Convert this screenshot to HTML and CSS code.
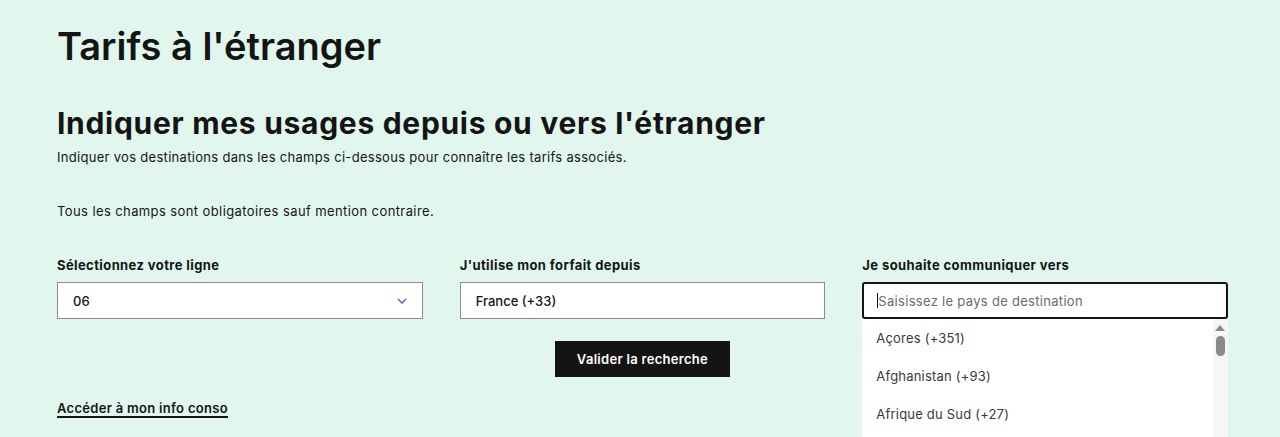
FILE: index.html
```html
<!DOCTYPE html>
<html lang="fr">
<head>
  <meta charset="UTF-8" />
  <meta name="viewport" content="width=device-width, initial-scale=1.0"/>
  <title>Tarifs à l'étranger</title>
  <link rel="stylesheet" href="styles.css">
</head>
<body>
  <main class="page">
    <h1>Tarifs à l'étranger</h1>

    <h2>Indiquer mes usages depuis ou vers l'étranger</h2>
    <p class="intro">Indiquer vos destinations dans les champs ci-dessous pour connaître les tarifs associés.</p>
    <p class="mandatory">Tous les champs sont obligatoires sauf mention contraire.</p>

    <div class="form">
      <div class="field">
        <label>Sélectionnez votre ligne</label>
        <div class="box select">
          <span>06</span>
          <svg class="chevron" width="10" height="6" viewBox="0 0 10 6"><path d="M1 1l4 4 4-4" fill="none" stroke="#6a5acd" stroke-width="1.5"/></svg>
        </div>
      </div>

      <div class="field">
        <label>J'utilise mon forfait depuis</label>
        <div class="box">France (+33)</div>
        <button class="submit">Valider la recherche</button>
      </div>

      <div class="field">
        <label>Je souhaite communiquer vers</label>
        <div class="combo">
          <div class="box active"><span class="caret"></span><span class="placeholder">Saisissez le pays de destination</span></div>
          <div class="dropdown">
            <ul class="options">
              <li>Açores (+351)</li>
              <li>Afghanistan (+93)</li>
              <li>Afrique du Sud (+27)</li>
            </ul>
            <div class="scrollbar">
              <span class="arrow"></span>
              <span class="thumb"></span>
            </div>
          </div>
        </div>
      </div>
    </div>

    <a class="conso" href="#">Accéder à mon info conso</a>
  </main>
</body>
</html>
```

FILE: styles.css
```css
body {
  margin: 0;
  background: #e1f7ee;
  font-family: Inter, "Open Sans", sans-serif;
  color: #141414;
  overflow: hidden;
}

.page {
  width: 1171px;
  margin-left: 57px;
  padding-top: 24px;
  height: 437px;
  box-sizing: border-box;
}

h1 {
  font-size: 38px;
  font-weight: 600;
  margin: 0;
  line-height: 44px;
}

h2 {
  font-size: 30px;
  font-weight: 700;
  margin: 37px 0 0;
  line-height: 36px;
  letter-spacing: 0.7px;
}

.intro, .mandatory {
  font-size: 13px;
  margin: 0;
  line-height: 20px;
  letter-spacing: 0.3px;
}

.intro {
  margin-top: 6px;
}

.mandatory {
  margin-top: 34px;
  letter-spacing: 0.4px;
}

.form {
  display: grid;
  grid-template-columns: repeat(3, 1fr);
  column-gap: 37px;
  margin-top: 34px;
}

.field label {
  display: block;
  font-size: 13px;
  font-weight: 700;
  line-height: 20px;
  margin-bottom: 7px;
  letter-spacing: 0.4px;
}

.box {
  height: 37px;
  box-sizing: border-box;
  background: #fff;
  border: 1px solid #8c8c8c;
  padding: 0 15px;
  display: flex;
  align-items: center;
  font-size: 13px;
  font-weight: 500;
}

.select {
  justify-content: space-between;
}

.combo {
  position: relative;
}

.active {
  border: 2px solid #141414;
  border-radius: 3px;
  padding: 0 13px;
}

.caret {
  width: 1px;
  height: 15px;
  background: #141414;
}

.placeholder {
  color: #6b6b6b;
  font-weight: 400;
  letter-spacing: 0.3px;
}

.submit {
  display: block;
  margin: 22px auto 0;
  width: 175px;
  height: 36px;
  background: #141414;
  color: #fff;
  border: none;
  font-family: inherit;
  font-size: 13px;
  font-weight: 600;
  letter-spacing: 0.3px;
}

.dropdown {
  position: absolute;
  left: 0;
  right: 0;
  top: 100%;
  display: flex;
  background: #fff;
  height: 120px;
}

.options {
  list-style: none;
  margin: 0;
  padding: 0;
  flex: 1;
}

.options li {
  height: 38px;
  line-height: 38px;
  padding-left: 14px;
  font-size: 13px;
  color: #3a3a3a;
  letter-spacing: 0.2px;
}

.scrollbar {
  width: 15px;
  background: #f6f6f6;
  display: flex;
  flex-direction: column;
  align-items: center;
  padding-top: 6px;
  gap: 5px;
}

.arrow {
  width: 0;
  height: 0;
  border-left: 5px solid transparent;
  border-right: 5px solid transparent;
  border-bottom: 6px solid #8a8a8a;
}

.thumb {
  width: 9px;
  height: 20px;
  border-radius: 5px;
  background: #8a8a8a;
}

.conso {
  display: inline-block;
  margin-top: 23px;
  font-size: 13px;
  line-height: 16px;
  font-weight: 600;
  color: #141414;
  text-decoration: none;
  border-bottom: 2px solid #141414;
  letter-spacing: 0.3px;
}
```
